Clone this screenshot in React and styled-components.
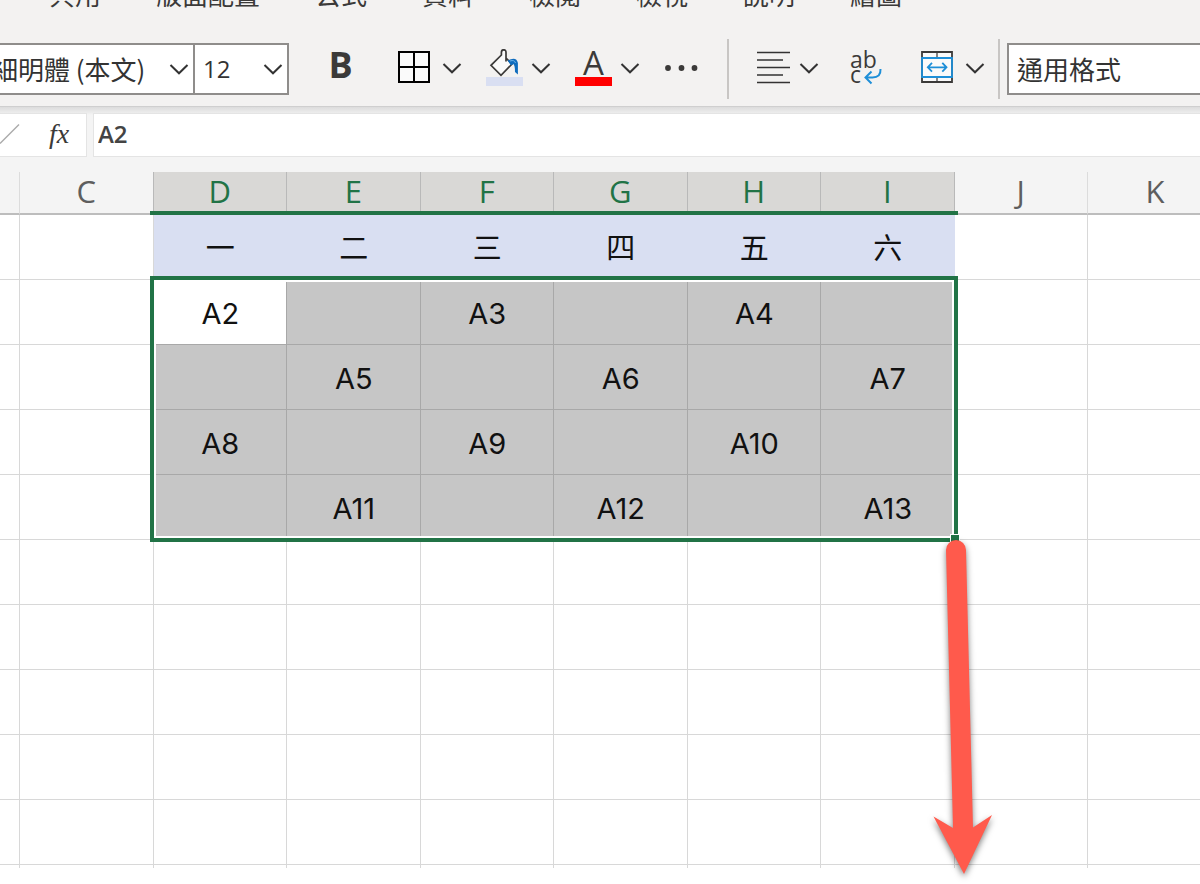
import React, { useState } from 'react';
import styled, { createGlobalStyle } from 'styled-components';

const colors = {
    ribbon: '#f3f2f1',
    bar: '#f4f4f4',
    ink: '#3b3a39',
    green: '#217346',
    blue: '#1e8fd8',
    line: '#d8d8d8',
    selected: '#c6c6c6',
    selectedLine: '#a8a8a8',
    weekday: '#d9dff2',
};

const uiFont = '"Open Sans", "Noto Sans CJK TC", sans-serif';
const cjkFont = '"Noto Sans CJK TC", sans-serif';

const GlobalStyles = createGlobalStyle`
    *, *::before, *::after {
        box-sizing: border-box;
    }

    body {
        margin: 0;
        background-color: #fff;
        font-family: ${uiFont};
        color: ${colors.ink};
    }

    button, select, input {
        font: inherit;
        color: inherit;
    }

    svg {
        display: block;
        flex: none;
    }
`;

const Wrapper = styled.div`
    width: 100%;
    min-height: 100vh;
    overflow: hidden;
`;

const Ribbon = styled.header`
    background-color: ${colors.ribbon};
    padding-bottom: 7px;
    border-bottom: 1px solid #cfcfcf;
`;

const Tabs = styled.nav`
    display: flex;
    align-items: flex-end;
    gap: 55px;
    height: 8px;
    margin-bottom: 31px;
    padding-left: 49px;
    overflow: hidden;

    a {
        flex: none;
        font-family: ${cjkFont};
        font-size: 26px;
        line-height: 28px;
        color: ${colors.ink};
        text-decoration: none;
    }
`;

const Toolbar = styled.div`
    display: flex;
    align-items: center;
    height: 60px;
`;

const Group = styled.div`
    display: flex;
    align-items: center;
    gap: 23px;
    flex: ${(props) => (props.$grow ? '1' : 'none')};
    padding: ${(props) => props.$pad};
`;

const Separator = styled.span`
    flex: none;
    width: 2px;
    height: 60px;
    background-color: #c8c6c4;
`;

const FontPickers = styled.div`
    display: flex;
    margin-left: -44px;
`;

const Combo = styled.label`
    position: relative;
    display: block;
    flex: ${(props) => (props.$width ? 'none' : '1')};
    width: ${(props) => props.$width || 'auto'};
    margin-right: -2px;

    select {
        appearance: none;
        display: block;
        width: 100%;
        height: 52px;
        padding: 0 8px 2px;
        border: 2px solid #8f8d8b;
        border-radius: 0;
        background-color: #fff;
        font-family: ${(props) => (props.$latin ? uiFont : cjkFont)};
        font-size: ${(props) => (props.$latin ? '24px' : '26px')};
        color: #333;
    }

    svg {
        position: absolute;
        top: 20px;
        right: 6px;
        pointer-events: none;
    }
`;

const ToolButton = styled.button`
    display: flex;
    flex: none;
    align-items: center;
    justify-content: center;
    gap: 8px;
    width: ${(props) => props.$width || '66px'};
    height: 52px;
    padding: 0 0 2px;
    border: 0;
    background: none;
    cursor: pointer;
`;

const BoldButton = styled(ToolButton)`
    padding: 0 2px 8px 0;
    font-size: 36px;
    font-weight: 700;
    line-height: 44px;
`;

const FormulaRow = styled.div`
    display: flex;
    gap: 6px;
    padding: 6px 0 15px;
    background: linear-gradient(#dcdcdc, #ededed 6px, ${colors.bar} 8px);
`;

const FormulaTools = styled.div`
    display: flex;
    align-items: center;
    width: 87px;
    height: 44px;
    border: 1px solid #e4e4e4;
    border-left: 0;
    background-color: #fff;

    button {
        padding: 0 0 2px;
        border: 0;
        background: none;
    }

    button + button {
        margin-left: 29px;
        font-family: "Liberation Serif", serif;
        font-size: 28px;
        font-style: italic;
        line-height: 40px;
    }
`;

const FormulaInput = styled.input`
    flex: 1;
    min-width: 0;
    height: 44px;
    padding: 0 4px 4px;
    border: 1px solid #e4e4e4;
    border-right: 0;
    border-radius: 0;
    outline: 0;
    background-color: #fff;
    font-size: 24px;
    font-weight: 600;
    color: #444;
`;

const Sheet = styled.main`
    --col: calc((100% - 132px) / 8);
    position: relative;
`;

const Grid = styled.table`
    width: 100%;
    table-layout: fixed;
    border-collapse: separate;
    border-spacing: 0;

    .edge-left {
        width: 20px;
    }

    .edge-right {
        width: 112px;
    }
`;

const ColumnHead = styled.th`
    height: 43px;
    padding: 0 0 3px;
    border-right: 1px solid ${(props) => (props.$selected || props.$before ? '#b9b9b9' : '#dcdcdc')};
    border-bottom: 2px solid ${(props) => (props.$selected ? colors.green : '#bdbdbd')};
    background-color: ${(props) => (props.$selected ? '#d9d8d6' : colors.bar)};
    font-size: 31px;
    font-weight: 500;
    line-height: 36px;
    color: ${(props) => (props.$selected ? colors.green : '#5e5e5e')};

    &:last-child {
        padding-left: 22px;
        border-right: 0;
    }
`;

const cellFill = {
    weekday: colors.weekday,
    selected: colors.selected,
    active: '#fff',
};

const cellLine = {
    weekday: colors.weekday,
    selected: colors.selectedLine,
    active: colors.selectedLine,
};

const Cell = styled.td`
    height: ${(props) => (props.$short ? '3px' : '65px')};
    padding: ${(props) => (props.$short ? '0' : '4px 0 0 1px')};
    border-right: 1px solid ${(props) => cellLine[props.$kind] || colors.line};
    border-bottom: ${(props) => (props.$short ? '0' : '1px')} solid
        ${(props) => cellLine[props.$kind] || colors.line};
    background-color: ${(props) => cellFill[props.$kind] || '#fff'};
    font-family: Inter, ${cjkFont};
    font-size: 29px;
    font-weight: 400;
    line-height: 40px;
    text-align: center;
    color: #111;

    &:last-child {
        border-right: 0;
    }
`;

const HeadMark = styled.div`
    position: absolute;
    top: 39px;
    left: calc(16px + var(--col));
    width: calc(var(--col) * 6 + 7px);
    height: 4px;
    background-color: ${colors.green};
`;

const Selection = styled.div`
    position: absolute;
    top: 104px;
    left: calc(16px + var(--col));
    width: calc(var(--col) * 6 + 7px);
    height: 266px;
    border: 4px solid ${colors.green};
    box-shadow: inset 0 0 0 2px #fff;
    pointer-events: none;

    &::after {
        content: '';
        position: absolute;
        right: -6px;
        bottom: -6px;
        width: 10px;
        height: 10px;
        border: 1px solid #fff;
        background-color: ${colors.green};
    }
`;

const Arrow = styled.svg`
    position: absolute;
    top: 364px;
    left: calc(var(--col) * 7 - 11px);
    filter: drop-shadow(0 3px 3px rgba(0, 0, 0, 0.5));
    pointer-events: none;
`;

const Chevron = () => (
    <svg width='20' height='12' viewBox='0 0 20 12' fill='none' stroke='#333' strokeWidth='2'>
        <path d='M1.5 2 L10 10.3 L18.5 2' />
    </svg>
);

const BordersIcon = () => (
    <svg width='38' height='38' viewBox='0 0 38 38' fill='#fafafa' stroke='#000' strokeWidth='2'>
        <path d='M3 3 H33 V33 H3 Z M18 3 V33 M3 18 H33' />
    </svg>
);

const FillIcon = () => (
    <svg width='38' height='38' viewBox='0 0 38 38' fill='none'>
        <rect x='1' y='28' width='37' height='9' fill={colors.weekday} />
        <path
            d='M14.5 7.5 L6 16.3 L16 26.3 L27 15 L21 9 V3.5 Q21 0.8 18.7 0.8 Q16.4 0.8 16.4 3.5 V6 Z'
            fill='#fafafa'
        />
        <path
            d='M21 12.5 V3.5 Q21 0.8 18.7 0.8 Q16.4 0.8 16.4 3.5 V6 L6 16.3 L16 26.3 L27 15 L21 9'
            stroke={colors.ink}
            strokeWidth='1.7'
        />
        <path d='M22.5 11.5 Q31.5 7 32.9 14 V25.5 L30 23 Q30 16 28.3 15 L26 16.4 Z' fill='#0f6cbd' />
        <path d='M25 12 Q29.5 10.5 30.5 14' stroke='#6cb2e8' strokeWidth='1' />
    </svg>
);

const FontColorIcon = () => (
    <svg width='38' height='38' viewBox='0 0 38 38'>
        <text x='19.5' y='26' textAnchor='middle' fontFamily='Open Sans' fontWeight='400' fontSize='33' fill={colors.ink}>
            A
        </text>
        <rect x='1' y='28' width='37' height='9' fill='#f00' />
    </svg>
);

const DotsIcon = () => (
    <svg width='40' height='6' viewBox='0 0 40 6' fill={colors.ink}>
        <circle cx='5' cy='3' r='2.9' />
        <circle cx='18.5' cy='3' r='2.9' />
        <circle cx='31.5' cy='3' r='2.9' />
    </svg>
);

const AlignIcon = () => (
    <svg width='38' height='38' viewBox='0 0 38 38' stroke='#333' strokeWidth='1.7'>
        <path d='M4 3.5 H37 M4 11 H30 M4 18.5 H37 M4 26 H30 M4 33.5 H37' />
    </svg>
);

const WrapIcon = () => (
    <svg width='54' height='40' viewBox='0 0 54 40' fill='none'>
        <g fontFamily='Open Sans' fontWeight='400' fontSize='23' fill={colors.ink}>
            <text x='8' y='20'>ab</text>
            <text x='8' y='35'>c</text>
        </g>
        <path
            d='M38.5 21 Q39 29.5 30.5 29.5 H23.5 M29.5 23.5 L23.5 29.5 L29.5 35.5'
            stroke={colors.blue}
            strokeWidth='2'
        />
    </svg>
);

const MergeIcon = () => (
    <svg width='38' height='38' viewBox='0 0 38 38' fill='none' stroke={colors.ink} strokeWidth='1.8'>
        <path d='M3 3 H33 V33 H3 Z' fill='#fafafa' />
        <path d='M18 3 V9 M18 27 V33' strokeWidth='1.2' />
        <path
            d='M3 9 H33 V28 H3 Z M9.2 18.3 H27 M13 13.9 L8.8 18.3 L13 22.7 M23.3 13.9 L27.5 18.3 L23.3 22.7'
            stroke={colors.blue}
        />
    </svg>
);

const CheckIcon = () => (
    <svg width='20' height='22' viewBox='0 0 20 22' stroke='#ababab' strokeWidth='1.5'>
        <path d='M0 20.5 L19 1.5' />
    </svg>
);

const tabs = ['共用', '版面配置', '公式', '資料', '檢閱', '檢視', '說明', '繪圖'];
const columns = ['', 'C', 'D', 'E', 'F', 'G', 'H', 'I', 'J', 'K'];
const rows = [
    ['一', '二', '三', '四', '五', '六'],
    ['A2', '', 'A3', '', 'A4', ''],
    ['', 'A5', '', 'A6', '', 'A7'],
    ['A8', '', 'A9', '', 'A10', ''],
    ['', 'A11', '', 'A12', '', 'A13'],
    [], [], [], [], [],
    [],
];

const FIRST = 2;
const LAST = 7;

/**
 * picks the look of a cell from its place in the sheet
 * @param {number} row - row index
 * @param {number} col - column index
 * @returns {string} - kind of the cell
 */
const cellKind = (row, col) => {
    if (col < FIRST || col > LAST || row > 4) return 'plain';
    if (row === 0) return 'weekday';
    return row === 1 && col === FIRST ? 'active' : 'selected';
};

const App = () => {
    const [formula, updateFormula] = useState('A2');

    return (
        <Wrapper>
            <GlobalStyles />
            <Ribbon>
                <Tabs>
                    {tabs.map((tab) => <a href='#tab' key={tab}>{tab}</a>)}
                </Tabs>
                <Toolbar>
                    <Group $pad='0 24px 0 0'>
                        <FontPickers>
                            <Combo $width='239px'>
                                <select aria-label='字型'>
                                    <option>新細明體 (本文)</option>
                                </select>
                                <Chevron />
                            </Combo>
                            <Combo $width='96px' $latin>
                                <select aria-label='字型大小'>
                                    <option>12</option>
                                </select>
                                <Chevron />
                            </Combo>
                        </FontPickers>
                        <BoldButton type='button' $width='63px'>B</BoldButton>
                        <ToolButton type='button' aria-label='框線'>
                            <BordersIcon />
                            <Chevron />
                        </ToolButton>
                        <ToolButton type='button' aria-label='填滿色彩'>
                            <FillIcon />
                            <Chevron />
                        </ToolButton>
                        <ToolButton type='button' aria-label='字型色彩'>
                            <FontColorIcon />
                            <Chevron />
                        </ToolButton>
                        <ToolButton type='button' aria-label='其他' $width='40px'>
                            <DotsIcon />
                        </ToolButton>
                    </Group>
                    <Separator />
                    <Group $pad='0 13px 0 24px'>
                        <ToolButton type='button' aria-label='對齊'>
                            <AlignIcon />
                            <Chevron />
                        </ToolButton>
                        <ToolButton type='button' aria-label='自動換行' $width='54px'>
                            <WrapIcon />
                        </ToolButton>
                        <ToolButton type='button' aria-label='合併儲存格'>
                            <MergeIcon />
                            <Chevron />
                        </ToolButton>
                    </Group>
                    <Separator />
                    <Group $grow $pad='0 0 0 7px'>
                        <Combo>
                            <select aria-label='數值格式'>
                                <option>通用格式</option>
                            </select>
                        </Combo>
                    </Group>
                </Toolbar>
            </Ribbon>
            <FormulaRow>
                <FormulaTools>
                    <button type='button' aria-label='輸入'><CheckIcon /></button>
                    <button type='button'>fx</button>
                </FormulaTools>
                <FormulaInput
                    aria-label='資料編輯列'
                    value={formula}
                    onChange={(e) => updateFormula(e.target.value)}
                />
            </FormulaRow>
            <Sheet>
                <Grid>
                    <colgroup>
                        {columns.map((name, i) => (
                            <col
                                key={name}
                                className={(i === 0 && 'edge-left') || (i === 9 && 'edge-right') || undefined}
                            />
                        ))}
                    </colgroup>
                    <thead>
                        <tr>
                            {columns.map((name, i) => (
                                <ColumnHead
                                    key={name}
                                    scope='col'
                                    $selected={i >= FIRST && i <= LAST}
                                    $before={i === FIRST - 1}
                                >
                                    {name}
                                </ColumnHead>
                            ))}
                        </tr>
                    </thead>
                    <tbody>
                        {rows.map((row, r) => (
                            <tr key={r}>
                                {columns.map((name, c) => (
                                    <Cell key={name} $kind={cellKind(r, c)} $short={r === rows.length - 1}>
                                        {row[c - FIRST]}
                                    </Cell>
                                ))}
                            </tr>
                        ))}
                    </tbody>
                </Grid>
                <HeadMark />
                <Selection />
                <Arrow width='80' height='344' viewBox='0 0 80 344' fill='#ff5a4c'>
                    <path d='M22 14 A10 10 0 0 1 42 14 L49 291.5 L68 279 L40 338 L9.5 280.5 L29 292 Z' />
                </Arrow>
            </Sheet>
        </Wrapper>
    );
};

export default App;
